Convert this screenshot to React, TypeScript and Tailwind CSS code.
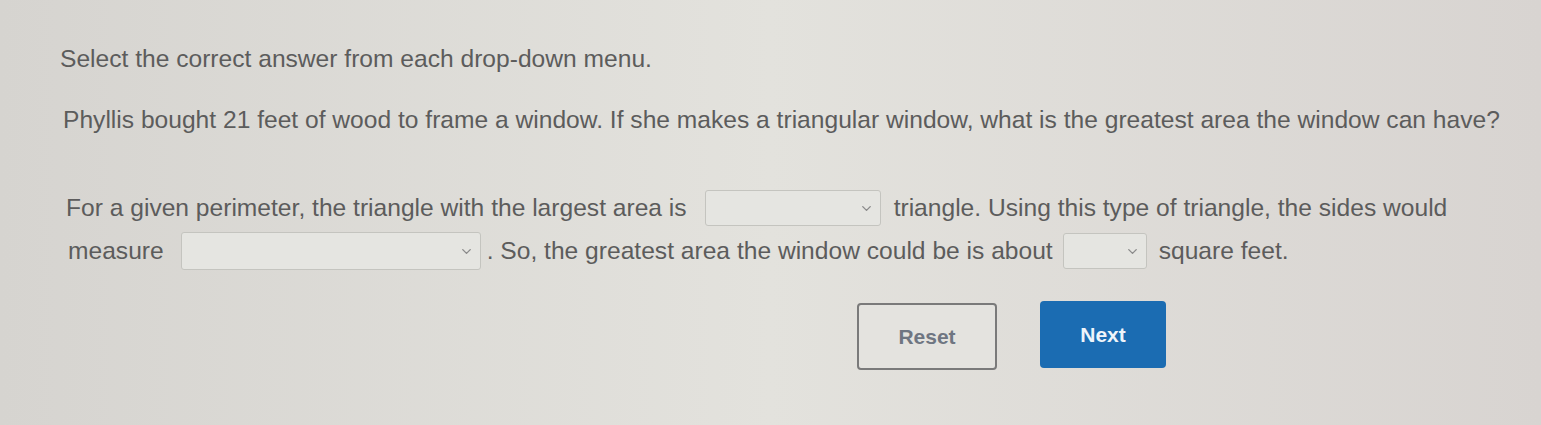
import { ChevronDown } from "lucide-react";

function Drop({ w, h = 36, className = "" }: { w: number; h?: number; className?: string }) {
  return (
    <span
      className={
        "inline-flex items-center justify-end rounded-[3px] border border-[#c4c4bf] bg-[#e5e5e1] pr-[6px] align-middle " +
        className
      }
      style={{ width: w, height: h }}
    >
      <ChevronDown className="h-[15px] w-[15px] text-[#8a8a8a]" strokeWidth={2.2} />
    </span>
  );
}

export default function App() {
  return (
    <div
      className="h-[425px] w-[1541px] overflow-hidden bg-gradient-to-r from-[#d6d4d0] via-[#e3e2dd] to-[#d8d4d1] text-[24.6px] text-[#5c5c5c]"
      style={{ fontFamily: '"Liberation Sans", Arial, sans-serif' }}
    >
      <div className="pt-[44px] pl-[60px]">
        <p className="leading-[30px]">Select the correct answer from each drop-down menu.</p>
        <p className="mt-[31px] pl-[3px] leading-[30px]">
          Phyllis bought 21 feet of wood to frame a window. If she makes a triangular window, what is the greatest area the window can have?
        </p>
        <div className="mt-[55px] flex items-center pl-[6px] leading-[30px]">
          <span>For a given perimeter, the triangle with the largest area is</span>
          <Drop w={176} className="ml-[18px] mr-[13px]" />
          <span>triangle. Using this type of triangle, the sides would</span>
        </div>
        <div className="mt-[6px] flex items-center pl-[8px] leading-[30px]">
          <span>measure</span>
          <Drop w={300} h={38} className="ml-[17px] mr-[6px]" />
          <span>. So, the greatest area the window could be is about</span>
          <Drop w={84} className="ml-[10px] mr-[12px]" />
          <span>square feet.</span>
        </div>
        <div className="mt-[33px] flex items-center gap-[43px] pl-[797px]">
          <button className="h-[67px] w-[140px] rounded-[4px] border-2 border-[#7a7a7a] bg-[#e4e3df] text-[21px] font-bold text-[#6f7682]">
            Reset
          </button>
          <button className="-mt-[4px] h-[67px] w-[126px] rounded-[4px] bg-[#1b6cb2] text-[21px] font-bold text-[#eef4fa]">
            Next
          </button>
        </div>
      </div>
    </div>
  );
}
